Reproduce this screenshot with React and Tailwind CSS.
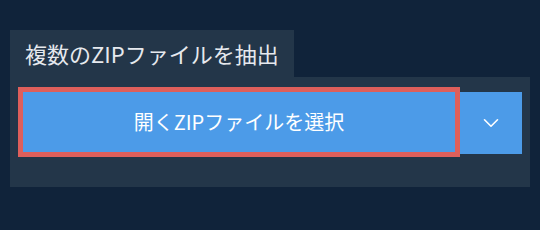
import { ChevronDown } from "lucide-react";

const App = () => {
  return (
    <div
      className="h-[230px] w-[540px] bg-[#10233a] pt-[30px] pl-[10px] pr-[10px]"
      style={{ fontFamily: '"Noto Sans CJK JP", "Noto Sans", sans-serif' }}
    >
      <div className="flex h-[47px] w-[284px] items-center bg-[#233649] pl-[15px] text-[22px] text-[#e6e9ee]">
        複数のZIPファイルを抽出
      </div>
      <div className="flex h-[110px] w-[520px] items-start bg-[#233649] pl-[13px] pt-[15px]">
        <button
          type="button"
          className="flex h-[60px] w-[432px] items-center justify-center bg-[#4c9be8] text-[20px] text-white outline-[5px] outline-solid outline-[#de5f5b]"
        >
          開くZIPファイルを選択
        </button>
        <button
          type="button"
          className="ml-[5px] flex h-[62px] w-[62px] items-center justify-center bg-[#4c9be8] text-white"
          aria-label="More options"
        >
          <ChevronDown size={26} strokeWidth={1.5} />
        </button>
      </div>
    </div>
  );
};

export default App;
